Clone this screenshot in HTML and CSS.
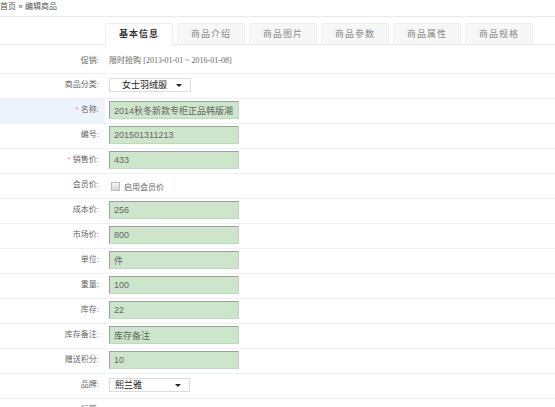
FILE: index.html
```html
<!DOCTYPE html>
<html lang="zh">
  <head>
    <meta charset="UTF-8" />
    <title>编辑商品</title>
    <link rel="stylesheet" href="styles.css">
  </head>
  <body>
    <div class="crumb">首页 » 编辑商品</div>

    <div class="tabs">
      <a href="#" class="tab active">基本信息</a>
      <a href="#" class="tab">商品介绍</a>
      <a href="#" class="tab">商品图片</a>
      <a href="#" class="tab">商品参数</a>
      <a href="#" class="tab">商品属性</a>
      <a href="#" class="tab">商品规格</a>
    </div>

    <table class="form">
      <tr class="first">
        <th>促销:</th>
        <td>限时抢购 <span class="dates">[2013-01-01 ~ 2016-01-08]</span></td>
      </tr>
      <tr>
        <th>商品分类:</th>
        <td class="sel"><span class="select wide">女士羽绒服</span></td>
      </tr>
      <tr class="hover">
        <th><span class="req">*</span> 名称:</th>
        <td><input type="text" value="2014秋冬新款专柜正品韩版潮"></td>
      </tr>
      <tr>
        <th>编号:</th>
        <td><input type="text" value="201501311213"></td>
      </tr>
      <tr>
        <th><span class="req">*</span> 销售价:</th>
        <td><input type="text" value="433"></td>
      </tr>
      <tr>
        <th>会员价:</th>
        <td class="mid"><label class="check"><span class="box"></span>启用会员价</label></td>
      </tr>
      <tr>
        <th>成本价:</th>
        <td><input type="text" value="256"></td>
      </tr>
      <tr>
        <th>市场价:</th>
        <td><input type="text" value="800"></td>
      </tr>
      <tr>
        <th>单位:</th>
        <td><input type="text" value="件"></td>
      </tr>
      <tr>
        <th>重量:</th>
        <td><input type="text" value="100"></td>
      </tr>
      <tr>
        <th>库存:</th>
        <td><input type="text" value="22"></td>
      </tr>
      <tr>
        <th>库存备注:</th>
        <td><input type="text" value="库存备注"></td>
      </tr>
      <tr>
        <th>赠送积分:</th>
        <td><input type="text" value="10"></td>
      </tr>
      <tr>
        <th>品牌:</th>
        <td class="sel"><span class="select">熙兰雅</span></td>
      </tr>
      <tr>
        <th>标签:</th>
        <td></td>
      </tr>
    </table>
  </body>
</html>
```

FILE: styles.css
```css
/* Page */
body {
  margin: 0;
  padding: 0;
  background-color: #fff;
  color: #666;
  font-family: "Liberation Sans", "Noto Sans CJK SC", sans-serif;
  font-size: 8px;
}

/* Breadcrumb */
.crumb {
  height: 16px;
  line-height: 14px;
  color: #555;
  border-bottom: 1px solid #e4ecf5;
}

/* Tabs */
.tabs {
  display: flex;
  gap: 4px;
  padding: 6px 0 0 105px;
  border-bottom: 1px solid #e6e6e6;
}
.tab {
  width: 66px;
  height: 20px;
  line-height: 20px;
  text-align: center;
  text-decoration: none;
  color: #888;
  font-size: 9px;
  letter-spacing: 1px;
  background-color: #f7f7f7;
  border: 1px solid #efefef;
  border-bottom: none;
  border-radius: 3px 3px 0 0;
}
.tab.active {
  background-color: #fff;
  color: #333;
  font-weight: bold;
  height: 21px;
  margin-bottom: -1px;
}

/* Form table */
.form {
  width: 100%;
  border-collapse: collapse;
}
.form tr {
  border-bottom: 1px solid #edf0f5;
}
.form th,
.form td {
  padding: 0;
  vertical-align: top;
}
.form th {
  width: 99px;
  padding: 0 6px 2px 0;
  line-height: 22px;
  text-align: right;
  font-weight: normal;
  color: #666;
}
.form td {
  padding: 2px 0 0 4px;
}
.form td.sel {
  padding-top: 4px;
}
.form td.mid {
  padding-top: 0;
  vertical-align: middle;
}
.form tr.first th,
.form tr.first td {
  padding-top: 5px;
  padding-bottom: 1px;
  line-height: 22px;
}
.form tr.hover th {
  background-color: #eef4fc;
}
.req {
  color: #f08080;
  font-size: 7px;
}

.dates {
  font-family: "Liberation Serif", serif;
}

/* Inputs */
input {
  display: block;
  width: 130px;
  height: 18px;
  box-sizing: border-box;
  margin: 0;
  padding: 0 4px;
  font-family: "Liberation Sans", "Noto Sans CJK SC", sans-serif;
  font-size: 9px;
  color: #666;
  background-color: #cce5cb;
  border: 1px solid #c3d6c3;
  border-top-color: #9aa59a;
  border-left-color: #9aa59a;
  outline: none;
}

/* Select */
.select {
  position: relative;
  display: block;
  width: 74px;
  height: 12px;
  line-height: 12px;
  padding-left: 5px;
  color: #222;
  font-size: 9px;
  background-color: #fff;
  border: 1px solid #ddd;
}
.select.wide {
  width: 68px;
  padding-left: 12px;
}
.select::after {
  content: "";
  position: absolute;
  right: 8px;
  top: 5px;
  border-left: 3px solid transparent;
  border-right: 3px solid transparent;
  border-top: 3px solid #222;
}

/* Checkbox */
.check {
  display: flex;
  align-items: center;
  gap: 4px;
  padding-left: 2px;
}
.box {
  width: 7px;
  height: 7px;
  border: 1px solid #bbb;
  background: linear-gradient(#f4f4f4, #d8d8d8);
}
```
